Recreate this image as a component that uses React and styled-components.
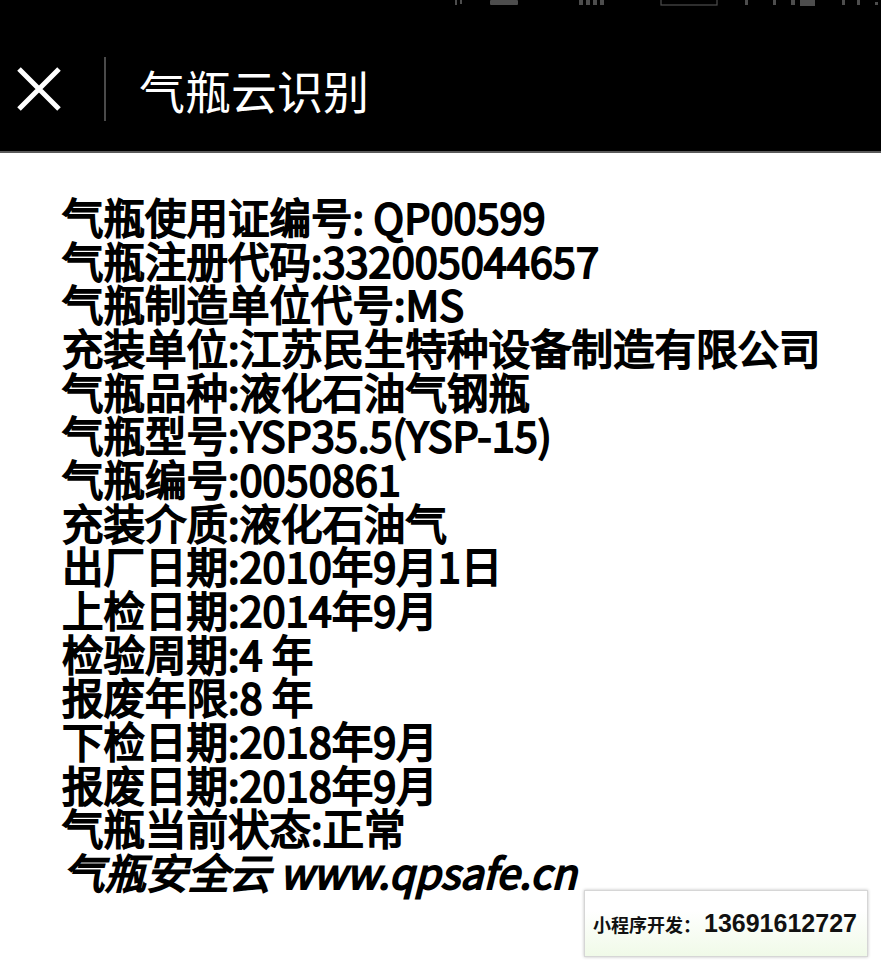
import React from "react";
import styled, { createGlobalStyle } from "styled-components";

const Global = createGlobalStyle`
  html, body { margin: 0; padding: 0; background: #fff; }
  body { font-family: "Noto Sans CJK SC", "Noto Sans", sans-serif; }
`;

const Page = styled.div`
  position: relative;
  width: 881px;
  height: 960px;
  overflow: hidden;
  background: #fff;
`;

const Header = styled.header`
  height: 151px;
  background: #000;
  border-bottom: 2px solid #5a5a5a;
  display: flex;
  flex-direction: column;
`;

const StatusBar = styled.div`
  height: 8px;
  display: flex;
  justify-content: flex-end;
  svg { display: block; }
`;

const TitleRow = styled.div`
  flex: 1;
  display: flex;
  align-items: center;
  padding-top: 19px;
`;

const CloseButton = styled.div`
  width: 104px;
  display: flex;
  align-items: center;
  padding-left: 17px;
  box-sizing: border-box;
  height: 64px;
`;

const Divider = styled.div`
  width: 2px;
  height: 64px;
  background: #4a4a4a;
`;

const Title = styled.h1`
  margin: 0 0 0 33px;
  color: #fff;
  font-weight: 400;
  font-size: 46px;
  line-height: 1;
`;

const Content = styled.main`
  padding: 42px 0 0 62px;
`;

const Line = styled.div`
  font-weight: 400;
  font-size: 41.5px;
  line-height: 43.65px;
  color: #000;
  white-space: nowrap;
  -webkit-text-stroke: 1.9px #000;
  font-style: ${(p) => (p.$italic ? "italic" : "normal")};
  padding-left: ${(p) => (p.$italic ? "1px" : "0")};
`;

const Badge = styled.div`
  position: absolute;
  left: 584px;
  top: 890px;
  width: 284px;
  height: 67px;
  box-sizing: border-box;
  border: 1px solid #d6d6d6;
  box-shadow: 0 0 3px rgba(0, 0, 0, 0.25);
  background: linear-gradient(#ffffff 30%, #f0fae8);
  display: flex;
  align-items: center;
  padding-left: 8px;
  gap: 3px;
  color: #111;
`;

const BadgeLabel = styled.span`
  font-weight: 700;
  font-size: 18px;
`;

const BadgeNumber = styled.span`
  font-family: "Liberation Sans", Arial, sans-serif;
  font-weight: 700;
  font-size: 25px;
`;

const lines = [
  "气瓶使用证编号: QP00599",
  "气瓶注册代码:332005044657",
  "气瓶制造单位代号:MS",
  "充装单位:江苏民生特种设备制造有限公司",
  "气瓶品种:液化石油气钢瓶",
  "气瓶型号:YSP35.5(YSP-15)",
  "气瓶编号:0050861",
  "充装介质:液化石油气",
  "出厂日期:2010年9月1日",
  "上检日期:2014年9月",
  "检验周期:4 年",
  "报废年限:8 年",
  "下检日期:2018年9月",
  "报废日期:2018年9月",
  "气瓶当前状态:正常",
];

function StatusIcons() {
  return (
    <svg width="440" height="8" viewBox="441 0 440 8">
      <g fill="#4d4d4d" stroke="none">
        <rect x="455" y="0" width="2" height="5" />
        <rect x="460" y="0" width="2" height="4" />
        <rect x="490" y="0" width="28" height="5" rx="1" />
        <rect x="579" y="0" width="4" height="5" />
        <rect x="586" y="0" width="4" height="5" />
        <rect x="593" y="0" width="4" height="5" />
        <rect x="600" y="0" width="4" height="5" />
        <rect x="745" y="0" width="3" height="5" />
        <rect x="773" y="0" width="3" height="5" />
        <rect x="791" y="0" width="4" height="5" />
        <rect x="800" y="0" width="15" height="6" />
        <rect x="842" y="0" width="3" height="5" />
        <rect x="857" y="0" width="3" height="5" />
        <rect x="875" y="2" width="3" height="3" />
      </g>
      <rect x="661" y="-4" width="56" height="9" fill="none" stroke="#4d4d4d" strokeWidth="1.2" />
    </svg>
  );
}

export default function App() {
  return (
    <Page>
      <Global />
      <Header>
        <StatusBar>
          <StatusIcons />
        </StatusBar>
        <TitleRow>
          <CloseButton>
            <svg width="44" height="44" viewBox="0 0 44 44">
              <path d="M2 2 L42 42 M42 2 L2 42" stroke="#fff" strokeWidth="5" />
            </svg>
          </CloseButton>
          <Divider />
          <Title>气瓶云识别</Title>
        </TitleRow>
      </Header>
      <Content>
        {lines.map((t) => (
          <Line key={t}>{t}</Line>
        ))}
        <Line $italic>气瓶安全云 www.qpsafe.cn</Line>
      </Content>
      <Badge>
        <BadgeLabel>小程序开发：</BadgeLabel>
        <BadgeNumber>13691612727</BadgeNumber>
      </Badge>
    </Page>
  );
}
